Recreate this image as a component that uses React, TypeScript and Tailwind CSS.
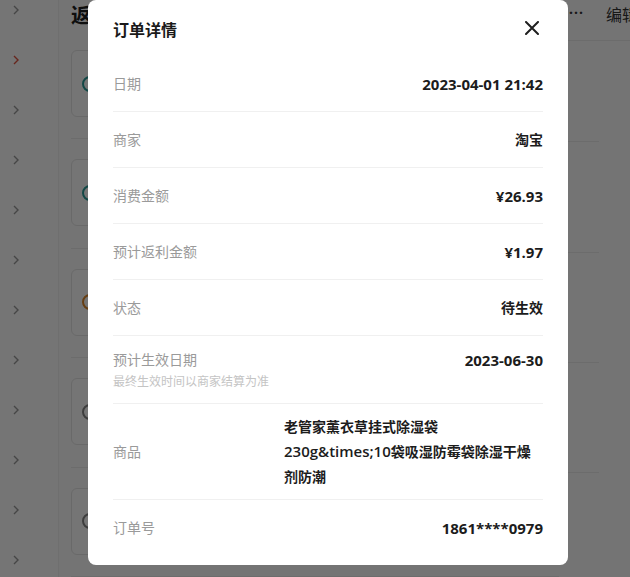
import React from "react";

const FONT = { fontFamily: '"Open Sans", "Noto Sans CJK SC", sans-serif' };
const CJK = { fontFamily: '"Noto Sans CJK SC", sans-serif' };

function Chevron({ red }: { red?: boolean }) {
  return (
    <svg width="8" height="10" viewBox="0 0 8 10" fill="none">
      <polyline points="2,1 6,5 2,9" stroke={red ? "#e0533f" : "#9a9a9a"} strokeWidth="1.4" />
    </svg>
  );
}

function Row({
  label,
  value,
  latin,
  last,
}: {
  label: string;
  value: string;
  latin?: boolean;
  last?: boolean;
}) {
  return (
    <div className={`flex h-[56px] items-center justify-between ${last ? "" : "border-b border-[#f0f0f0]"}`}>
      <span className="text-[14px] leading-5 text-[#9a9a9a]">{label}</span>
      {latin ? (
        <span className="text-[15px] leading-5 font-bold text-[#1c1c1c]">{value}</span>
      ) : (
        <span className="text-[14px] leading-5 font-semibold text-[#1c1c1c]">{value}</span>
      )}
    </div>
  );
}

export default function App() {
  const groups = [0, 1, 2, 3, 4];
  const circleColors = ["#2a9d9a", "#2a9d9a", "#e08a2c", "#888888", "#888888"];
  return (
    <div className="relative h-[577px] w-[630px] overflow-hidden bg-white" style={FONT}>
      {/* Background page */}
      <div className="flex h-full">
        <div className="flex w-[58px] shrink-0 flex-col bg-white">
          <div className="-mt-[15px] flex flex-col">
            {Array.from({ length: 12 }).map((_, i) => (
              <div key={i} className="flex h-[50px] items-center pl-[12px]">
                <Chevron red={i === 1} />
              </div>
            ))}
          </div>
        </div>
        <div className="flex flex-1 border-l border-[#f2f2f2] bg-[#fdfdfd]">
          <div className="flex w-[500px] shrink-0 flex-col pl-[12px]">
            <div className="flex h-[33px] items-center text-[20px] font-bold text-[#222]" style={CJK}>
              返利订单
            </div>
            {groups.map((g, i) => (
              <div key={g} className="flex h-[125px] flex-col border-b border-[#ececec] pt-[20px]">
                <div className="flex h-[67px] w-[300px] items-center rounded-md border border-[#e5e5e5] bg-white pl-[10px]">
                  <div className="h-[16px] w-[16px] rounded-full border-2" style={{ borderColor: circleColors[i] }} />
                </div>
              </div>
            ))}
          </div>
          <div className="flex flex-1 flex-col">
            <div className="flex h-[42px] items-start whitespace-nowrap border-b border-[#ececec] pt-[2px]">
              <span className="shrink-0 pl-[10px] text-[14px] font-bold tracking-[1px] text-[#333]">···</span>
              <span className="ml-[22px] shrink-0 text-[16px] text-[#333]" style={CJK}>编辑</span>
            </div>
            <div className="h-[103px] w-[40px] border-b border-[#ececec]" />
            <div className="h-[113px] w-[40px] border-b border-[#ececec]" />
            <div className="h-[112px] w-[40px] border-b border-[#ececec]" />
            <div className="h-[112px] w-[40px] border-b border-[#ececec]" />
            <div className="flex flex-col items-end pt-[56px] text-[14px] text-[#777]" style={CJK}>
              <span className="-mr-[8px]">关</span>
              <span className="-mr-[8px] mt-[6px]">关</span>
            </div>
          </div>
        </div>
      </div>

      {/* Overlay */}
      <div className="absolute inset-0 bg-black/[0.54]" />

      {/* Modal */}
      <div className="absolute left-[88px] top-0 flex h-[565px] w-[480px] flex-col rounded-lg bg-white px-[25px]" style={FONT}>
        <div className="flex h-[56px] shrink-0 items-center justify-between pt-[3px]">
          <span className="text-[16px] font-semibold leading-6 text-[#1a1a1a]">订单详情</span>
          <button className="-mr-[1px] -mt-[3px] flex h-[24px] w-[24px] items-center justify-center">
            <svg width="14" height="14" viewBox="0 0 14 14" fill="none">
              <path d="M1 1 L13 13 M13 1 L1 13" stroke="#1f1f1f" strokeWidth="2" strokeLinecap="round" />
            </svg>
          </button>
        </div>
        <Row label="日期" value="2023-04-01 21:42" latin />
        <Row label="商家" value="淘宝" />
        <Row label="消费金额" value="¥26.93" latin />
        <Row label="预计返利金额" value="¥1.97" latin />
        <Row label="状态" value="待生效" />
        <div className="flex h-[68px] items-start justify-between border-b border-[#f0f0f0] pt-[14px]">
          <div className="flex flex-col">
            <span className="text-[14px] leading-5 text-[#9a9a9a]">预计生效日期</span>
            <span className="mt-[4px] text-[12px] leading-4 text-[#c4c4c4]">最终生效时间以商家结算为准</span>
          </div>
          <span className="text-[15px] font-bold leading-5 text-[#1c1c1c]">2023-06-30</span>
        </div>
        <div className="flex h-[96px] items-center justify-between border-b border-[#f0f0f0]">
          <span className="text-[14px] leading-5 text-[#9a9a9a]">商品</span>
          <span className="w-[259px] text-left text-[14px] font-semibold leading-[25px] text-[#1c1c1c]">
            老管家薰衣草挂式除湿袋<span className="text-[15px] leading-[25px]">230g&amp;times;10</span>袋吸湿防霉袋除湿干燥剂防潮
          </span>
        </div>
        <Row label="订单号" value="1861****0979" latin last />
      </div>
    </div>
  );
}
